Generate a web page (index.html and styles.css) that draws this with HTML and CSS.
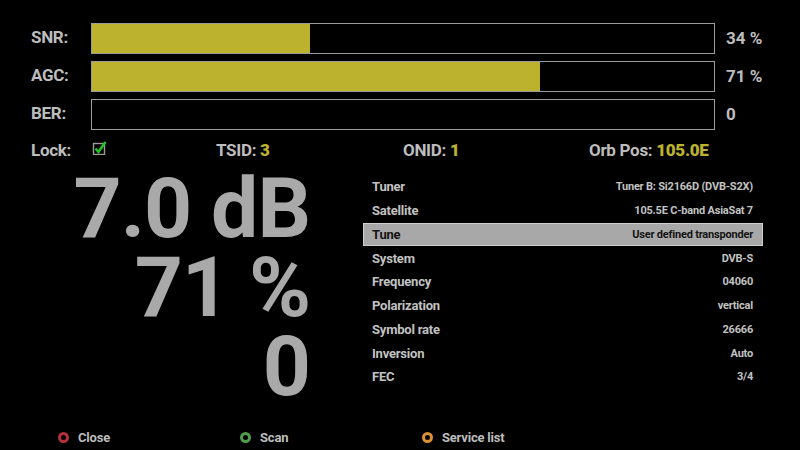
FILE: index.html
```html
<!DOCTYPE html>
<html>
	<head>
		<meta charset="utf-8">
		<title>Signal finder</title>
		<link rel="stylesheet" href="styles.css">
	</head>
	<body>
		<div class="screen">
			<div class="meters">
				<span class="m-label">SNR:</span>
				<div class="bar"><div class="fill" style="width:35%"></div></div>
				<span class="m-value">34 %</span>
				<span class="m-label">AGC:</span>
				<div class="bar"><div class="fill" style="width:72%"></div></div>
				<span class="m-value">71 %</span>
				<span class="m-label">BER:</span>
				<div class="bar"><div class="fill" style="width:0%"></div></div>
				<span class="m-value">0</span>
			</div>

			<div class="status">
				<span>Lock:</span>
				<span class="check">
					<svg width="16" height="16" viewBox="0 0 16 16">
						<rect x="1.5" y="4.5" width="11" height="11" fill="none" stroke="#9a9a9a" stroke-width="1.4"/>
						<path d="M3.5 9.5 L6.5 13 L13.5 3" fill="none" stroke="#22c02a" stroke-width="2.6"/>
					</svg>
				</span>
				<span>TSID: <b>3</b></span>
				<span>ONID: <b>1</b></span>
				<span>Orb Pos: <b>105.0E</b></span>
			</div>

			<div class="main">
				<div class="big">
					<div>7.0 dB</div>
					<div>71 %</div>
					<div>0</div>
				</div>
				<ul class="info">
					<li><span>Tuner</span><span class="val">Tuner B: Si2166D (DVB-S2X)</span></li>
					<li><span>Satellite</span><span class="val">105.5E C-band AsiaSat 7</span></li>
					<li class="sel"><span>Tune</span><span class="val">User defined transponder</span></li>
					<li><span>System</span><span class="val">DVB-S</span></li>
					<li><span>Frequency</span><span class="val">04060</span></li>
					<li><span>Polarization</span><span class="val">vertical</span></li>
					<li><span>Symbol rate</span><span class="val">26666</span></li>
					<li><span>Inversion</span><span class="val">Auto</span></li>
					<li><span>FEC</span><span class="val">3/4</span></li>
				</ul>
			</div>

			<div class="keys">
				<span class="key"><i class="dot red"></i>Close</span>
				<span class="key"><i class="dot green"></i>Scan</span>
				<span class="key"><i class="dot orange"></i>Service list</span>
			</div>
		</div>
	</body>
</html>
```

FILE: styles.css
```css
*{
	padding: 0;
	margin: 0;
	box-sizing: border-box;
}
body{
	background: #000;
	font-family: Roboto, "Liberation Sans", sans-serif;
	color: #bdbdbd;
}
.screen{
	width: 800px;
	height: 450px;
	padding: 23px 0 0 31px;
	overflow: hidden;
}

/* signal bars */
.meters{
	display: grid;
	grid-template-columns: 60px 624px auto;
	grid-auto-rows: 31px;
	row-gap: 7px;
	align-items: center;
}
.m-label{
	font-size: 17px;
	font-weight: bold;
	letter-spacing: -0.3px;
	padding-bottom: 3px;
}
.m-value{
	font-size: 17px;
	font-weight: bold;
	margin-left: 11px;
	padding-bottom: 1px;
}
.bar{
	height: 31px;
	border: 1.5px solid #9c9c9c;
}
.fill{
	height: 100%;
	background: #bcb22e;
}

/* lock row */
.status{
	display: grid;
	grid-template-columns: 61px 124px 187px 186px auto;
	align-items: center;
	height: 30px;
	margin-top: 5px;
	font-size: 17px;
	font-weight: bold;
	letter-spacing: -0.3px;
}
.status b{
	color: #bcb22e;
}
.check svg{
	display: block;
	margin-top: -6px;
}

/* main */
.main{
	display: flex;
	margin-top: 4px;
}
.big{
	width: 279px;
	text-align: right;
	font-size: 84px;
	font-weight: bold;
	line-height: 79px;
	color: #a9a9a9;
	letter-spacing: -1px;
}
.info{
	list-style: none;
	width: 400px;
	margin-left: 53px;
	margin-top: 6px;
}
.info li{
	display: flex;
	justify-content: space-between;
	align-items: center;
	height: 23.75px;
	padding: 0 10px 0 9px;
	font-size: 13px;
	font-weight: bold;
	letter-spacing: -0.2px;
	color: #c2c2c2;
}
.info .val{
	font-size: 11px;
}
.info .sel{
	background: #a8a8a8;
	border: 1px solid #cfcfcf;
	color: #141414;
	padding: 0 9px 0 8px;
}

/* color keys */
.keys{
	display: grid;
	grid-template-columns: 182px 182px auto;
	margin-top: 24px;
	padding-left: 27px;
	font-size: 13px;
	font-weight: bold;
	letter-spacing: -0.2px;
}
.key{
	display: flex;
	align-items: center;
}
.dot{
	width: 11px;
	height: 11px;
	border-radius: 50%;
	border: 3px solid;
	margin-right: 9px;
}
.red{ border-color: #b5323c; }
.green{ border-color: #4f9d4c; }
.orange{ border-color: #d9922f; }
```
